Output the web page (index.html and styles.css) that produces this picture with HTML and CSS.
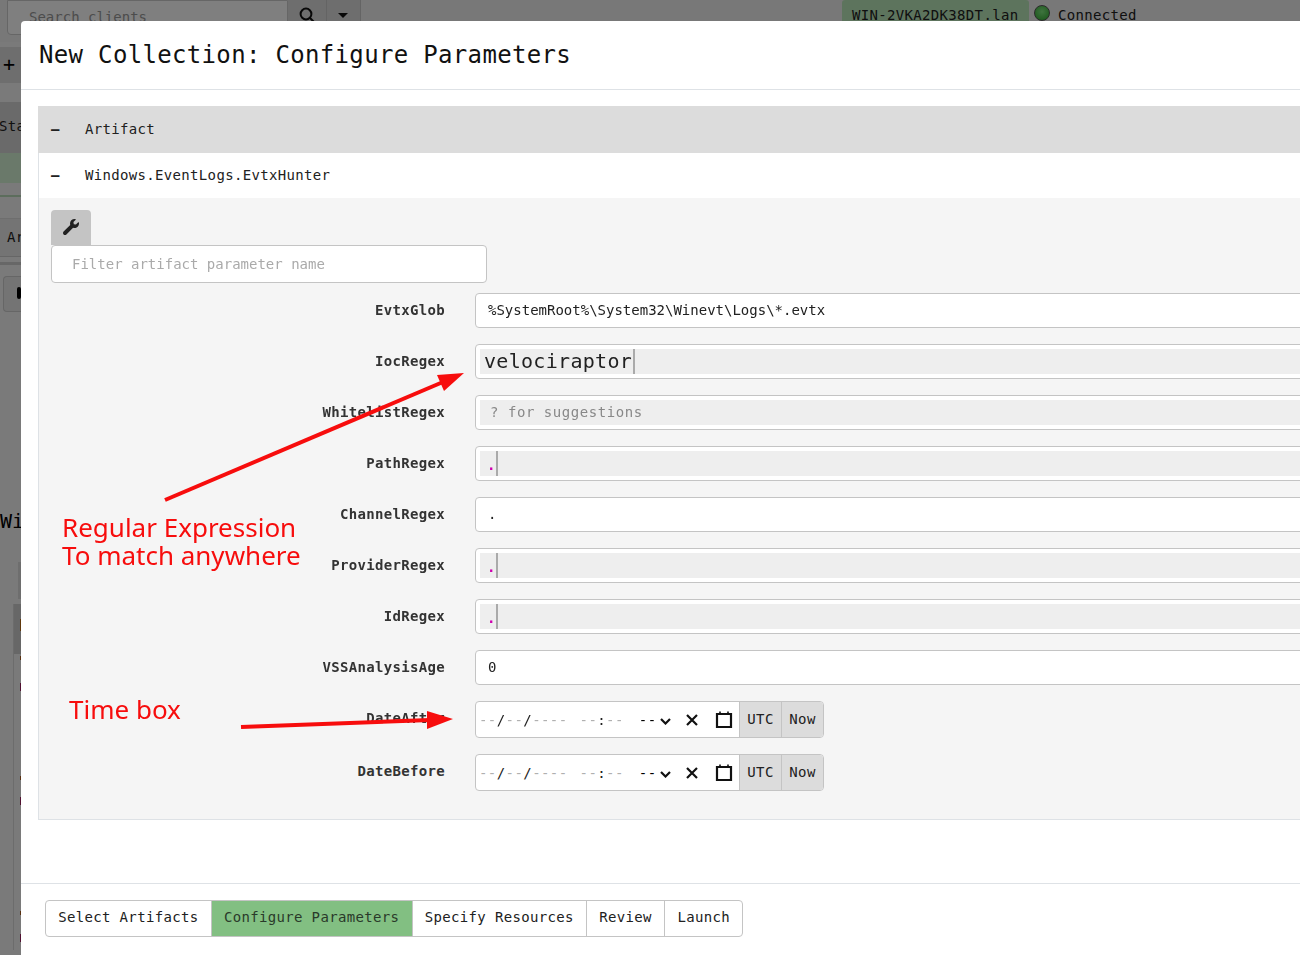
FILE: index.html
```html
<!DOCTYPE html>
<html lang="en">
<head>
    <meta charset="UTF-8">
    <meta name="viewport" content="width=device-width, initial-scale=1.0">
    <title>New Collection: Configure Parameters</title>
    <link rel="stylesheet" href="styles.css">
</head>
<body>
    <div class="page">
        <div class="navbar">
            <div class="search-box">Search clients</div>
            <div class="search-btn">
                <svg width="16" height="16" viewBox="0 0 16 16"><circle cx="7" cy="7" r="5.4" fill="none" stroke="#111" stroke-width="2"/><path d="M11 11l4 4" stroke="#111" stroke-width="2"/></svg>
            </div>
            <div class="search-btn search-caret"><span class="caret"></span></div>
            <div class="navbar-right">
                <div class="org-badge">WIN-2VKA2DK38DT.lan</div>
                <span class="led"></span>
                <span class="conn">Connected</span>
            </div>
        </div>
        <div class="side">
            <div class="side-tab">+</div>
            <div class="side-head">Sta</div>
            <div class="side-green"></div>
            <div class="side-line"></div>
            <div class="side-row">Ar</div>
            <div class="side-rule"></div>
            <div class="side-btn"><span></span></div>
            <div class="side-name">Wi</div>
            <div class="side-box"></div>
            <div class="side-table">
                <div class="side-thead"><i></i></div>
                <i class="mark m1"></i><i class="mark m2"></i><i class="mark m3"></i><i class="mark m4"></i><i class="mark m5"></i><i class="mark m6"></i>
            </div>
        </div>
    </div>
    <div class="backdrop"></div>

    <div class="modal">
        <div class="modal-header">New Collection: Configure Parameters</div>
        <div class="modal-body">
            <div class="acc-head"><span class="acc-sign">–</span>Artifact</div>
            <div class="acc-sub"><span class="acc-sign">–</span>Windows.EventLogs.EvtxHunter</div>
            <div class="panel">
                <div class="wrench-btn">
                    <svg width="16" height="16" viewBox="0 0 512 512"><path fill="#212121" d="M507.73 109.1c-2.24-9.03-13.54-12.09-20.12-5.51l-74.36 74.36-67.88-11.31-11.31-67.88 74.36-74.36c6.62-6.62 3.43-17.9-5.66-20.16-47.38-11.74-99.55.91-136.58 37.93-39.64 39.64-50.55 97.1-34.05 147.2L18.74 402.76c-24.99 24.99-24.99 65.51 0 90.5 24.99 24.99 65.51 24.99 90.5 0l213.21-213.21c50.12 16.71 107.47 5.68 147.37-34.22 37.07-37.07 49.7-89.32 37.91-136.73z"/></svg>
                </div>
                <div class="filter-input">Filter artifact parameter name</div>

                <div class="param">
                    <label>EvtxGlob</label>
                    <div class="field plain">%SystemRoot%\System32\Winevt\Logs\*.evtx</div>
                </div>
                <div class="param">
                    <label>IocRegex</label>
                    <div class="field"><div class="editor big">velociraptor<span class="cursor"></span></div></div>
                </div>
                <div class="param">
                    <label>WhitelistRegex</label>
                    <div class="field"><div class="editor hint">? for suggestions</div></div>
                </div>
                <div class="param">
                    <label>PathRegex</label>
                    <div class="field"><div class="editor"><span class="dot">.</span><span class="cursor"></span></div></div>
                </div>
                <div class="param">
                    <label>ChannelRegex</label>
                    <div class="field plain">.</div>
                </div>
                <div class="param">
                    <label>ProviderRegex</label>
                    <div class="field"><div class="editor"><span class="dot">.</span><span class="cursor"></span></div></div>
                </div>
                <div class="param">
                    <label>IdRegex</label>
                    <div class="field"><div class="editor"><span class="dot">.</span><span class="cursor"></span></div></div>
                </div>
                <div class="param">
                    <label>VSSAnalysisAge</label>
                    <div class="field plain">0</div>
                </div>
                <div class="param date-param">
                    <label>DateAfter</label>
                    <div class="date-group">
                        <div class="date-text">
                            <span class="dim">--</span>/<span class="dim">--</span>/<span class="dim">----</span>
                            <span class="date-time"><span class="dim">--</span>:<span class="dim">--</span></span>
                            <span class="date-ampm">--</span>
                            <svg class="chev" width="11" height="7" viewBox="0 0 11 7"><path d="M1 1l4.5 4.5L10 1" fill="none" stroke="#111" stroke-width="2.2"/></svg>
                        </div>
                        <svg class="clear" width="12" height="12" viewBox="0 0 12 12"><path d="M1 1l10 10M11 1L1 11" stroke="#111" stroke-width="2.2"/></svg>
                        <svg class="cal" width="18" height="18" viewBox="0 0 18 18"><path d="M2 3h14v13H2z" fill="none" stroke="#111" stroke-width="2.2"/><path d="M5 0.5v3M13 0.5v3" stroke="#111" stroke-width="1.6"/></svg>
                        <div class="date-btn">UTC</div>
                        <div class="date-btn">Now</div>
                    </div>
                </div>
                <div class="param date-param">
                    <label>DateBefore</label>
                    <div class="date-group">
                        <div class="date-text">
                            <span class="dim">--</span>/<span class="dim">--</span>/<span class="dim">----</span>
                            <span class="date-time"><span class="dim">--</span>:<span class="dim">--</span></span>
                            <span class="date-ampm">--</span>
                            <svg class="chev" width="11" height="7" viewBox="0 0 11 7"><path d="M1 1l4.5 4.5L10 1" fill="none" stroke="#111" stroke-width="2.2"/></svg>
                        </div>
                        <svg class="clear" width="12" height="12" viewBox="0 0 12 12"><path d="M1 1l10 10M11 1L1 11" stroke="#111" stroke-width="2.2"/></svg>
                        <svg class="cal" width="18" height="18" viewBox="0 0 18 18"><path d="M2 3h14v13H2z" fill="none" stroke="#111" stroke-width="2.2"/><path d="M5 0.5v3M13 0.5v3" stroke="#111" stroke-width="1.6"/></svg>
                        <div class="date-btn">UTC</div>
                        <div class="date-btn">Now</div>
                    </div>
                </div>
            </div>
        </div>
        <div class="modal-footer">
            <div class="steps">
                <div class="step">Select Artifacts</div>
                <div class="step active">Configure Parameters</div>
                <div class="step">Specify Resources</div>
                <div class="step">Review</div>
                <div class="step">Launch</div>
            </div>
        </div>
    </div>

    <!-- annotations drawn on top of the screenshot -->
    <div class="note note-regex">Regular Expression<br>To match anywhere</div>
    <div class="note note-time">Time box</div>
    <svg class="arrows" width="1300" height="955" viewBox="0 0 1300 955">
        <path d="M165 500L443 382" stroke="#f70d0d" stroke-width="4" fill="none"/>
        <path d="M464 373L437 375L444 391z" fill="#f70d0d"/>
        <path d="M241 727L430 720" stroke="#f70d0d" stroke-width="4" fill="none"/>
        <path d="M453 719L427 711L427 729z" fill="#f70d0d"/>
    </svg>
</body>
</html>
```

FILE: styles.css
```css
* {
    box-sizing: border-box;
}
body {
    margin: 0;
    height: 955px;
    overflow: hidden;
    background: #f6f6f6;
    color: #212121;
    font-family: "DejaVu Sans Mono", monospace;
    font-size: 14px;
    letter-spacing: 0.33px;
}

/* page behind the dialog */
.page {
    height: 955px;
    display: flex;
    flex-direction: column;
}
.navbar {
    height: 42px;
    flex: none;
    display: flex;
    padding-left: 7px;
    background: #f0f0f0;
}
.search-box {
    width: 281px;
    height: 35px;
    padding: 8px 21px;
    background: #fff;
    border: 1px solid #ccc;
    border-radius: 0 0 4px 4px;
    color: #999;
    letter-spacing: 0;
}
.search-btn {
    width: 39px;
    height: 35px;
    padding: 7px 11px;
    background: #dcdcdc;
    border-right: 1px solid #c8c8c8;
}
.search-caret {
    width: 34px;
    padding: 13px 11px;
}
.caret {
    display: block;
    width: 0;
    border: 5px solid transparent;
    border-top: 5px solid #111;
    border-bottom: 0;
}
.navbar-right {
    margin-left: 481px;
    display: flex;
    align-items: flex-start;
}
.org-badge {
    width: 187px;
    height: 24px;
    padding: 7px 10px;
    background: #bbe8bb;
    border-radius: 3px;
}
.led {
    width: 16px;
    height: 16px;
    margin: 5px 8px 0 5px;
    border-radius: 50%;
    background: radial-gradient(circle at 50% 40%, #7fe87f, #2fa82f);
    border: 1px solid #555;
}
.conn {
    padding-top: 7px;
}
.side {
    width: 21px;
    flex: 1;
    overflow: hidden;
    padding-top: 5px;
    background: #f4f4f4;
}
.side-tab {
    height: 36px;
    padding: 5px 0 0 3px;
    background: #dcdcdc;
    font-size: 20px;
    line-height: 24px;
    color: #000;
}
.side-head {
    height: 51px;
    margin: 19px 0 0;
    padding-top: 16px;
    margin-left: -1px;
    background: #d4d4d4;
}
.side-green {
    height: 30px;
    background: #d4f2d4;
}
.side-line {
    height: 14px;
    border-bottom: 2px solid #b9dab9;
}
.side-row {
    height: 39px;
    margin-top: 21px;
    padding: 10px 0 0 7px;
    background: #e8e8e8;
    border-bottom: 1px solid #ccc;
    border-top: 1px solid #ddd;
}
.side-rule {
    height: 3px;
    margin-top: 5px;
    background: #cfcfcf;
}
.side-btn {
    height: 36px;
    margin: 11px 0 0 3px;
    padding: 10px 0 0 13px;
    background: #e8e8e8;
    border: 1px solid #ccc;
    border-right: 0;
    border-radius: 4px 0 0 4px;
}
.side-btn span {
    display: block;
    height: 12px;
    background: #000;
    border-radius: 2px;
}
.side-name {
    height: 32px;
    margin-top: 193px;
    font-size: 20px;
    line-height: 32px;
    color: #000;
    letter-spacing: 0;
    white-space: nowrap;
}
.side-box {
    height: 37px;
    margin: 25px 0 0 18px;
    background: #dcdcdc;
}
.side-table {
    position: relative;
    height: 346px;
    margin: 5px 0 0 13px;
    border-left: 1px solid #d8d8d8;
}
.side-thead {
    height: 50px;
    background: #cfcfcf;
}
.side-thead i {
    display: block;
    width: 1px;
    height: 12px;
    margin-left: 6px;
    transform: translateY(15px);
    background: #c07018;
}
.mark {
    position: absolute;
    left: 6px;
    width: 2px;
    height: 8px;
    background: #b06020;
}
.m1 { top: 52px; height: 4px; }
.m2 { top: 79px; background: #a02060; }
.m3 { top: 172px; height: 4px; }
.m4 { top: 193px; background: #a02060; }
.m5 { top: 307px; height: 4px; }
.m6 { top: 330px; background: #a02060; }
.backdrop {
    position: fixed;
    inset: 0;
    background: rgba(0, 0, 0, 0.5);
}

/* dialog */
.modal {
    position: absolute;
    left: 21px;
    top: 21px;
    width: 1340px;
    height: 940px;
    display: flex;
    flex-direction: column;
    background: #fff;
    border-radius: 4px;
}
.modal-header {
    height: 69px;
    flex: none;
    padding: 18px 18px 0;
    border-bottom: 1px solid #dee2e6;
    font-size: 24px;
    line-height: 32px;
    color: #111;
}
.modal-body {
    flex: 1;
    padding: 16px 0 0 17px;
}
.acc-head {
    height: 47px;
    padding: 14px 0 0 13px;
    background: #dcdcdc;
    line-height: 18px;
}
.acc-sub {
    height: 45px;
    padding: 13px 0 0 12px;
    border-left: 1px solid #dee2e6;
    line-height: 18px;
}
.acc-sign {
    display: inline-block;
    width: 34px;
    font-weight: bold;
}
.panel {
    height: 622px;
    padding: 12px 0 0 12px;
    background: #f5f5f5;
    border: 1px solid #dee2e6;
    border-top: 0;
}
.wrench-btn {
    width: 40px;
    height: 35px;
    padding-top: 9px;
    text-align: center;
    background: #c4c4c4;
    border-radius: 4px 4px 0 0;
}
.filter-input {
    width: 436px;
    height: 38px;
    padding: 10px 20px;
    background: #fff;
    border: 1px solid #c4c4c4;
    border-radius: 4px;
    color: #aaa;
    letter-spacing: 0;
}
.param {
    display: flex;
    height: 35px;
    margin-top: 16px;
}
.filter-input + .param {
    margin-top: 10px;
}
.date-param {
    height: 37px;
}
.param label {
    width: 394px;
    flex: none;
    padding-top: 9px;
    text-align: right;
    font-weight: bold;
    color: #333;
}
.field {
    margin-left: 30px;
    flex: 1;
    padding: 4px;
    background: #fff;
    border: 1px solid #c4c4c4;
    border-radius: 4px;
}
.plain {
    padding: 8px 12px;
    letter-spacing: 0;
}
.editor {
    height: 25px;
    padding-left: 10px;
    background: #eee;
    display: flex;
    line-height: 25px;
}
.big {
    padding-left: 4px;
    font-size: 20px;
    letter-spacing: 0.3px;
}
.hint {
    color: #888;
    letter-spacing: 0.55px;
}
.cursor {
    width: 2px;
    height: 25px;
    margin-left: 1px;
    background: #aaa;
}
.dot {
    width: 8px;
    margin-left: -3px;
    color: #d000b0;
    font-weight: bold;
    padding-top: 2px;
}
.date-group {
    margin-left: 30px;
    width: 349px;
    display: flex;
    align-items: center;
    background: #fff;
    border: 1px solid #c4c4c4;
    border-radius: 4px;
    overflow: hidden;
}
.date-text {
    width: 204px;
    padding-left: 3px;
    white-space: pre;
    display: flex;
    align-items: center;
    letter-spacing: 0.42px;
}
.dim {
    color: #b0b0b0;
}
.date-time {
    margin-left: 12px;
}
.date-ampm {
    margin-left: 15px;
    color: #000;
}
.chev {
    margin-left: 3px;
    margin-top: 3px;
}
.clear {
    margin-left: 6px;
}
.cal {
    margin-left: 17px;
    margin-right: 6px;
}
.date-btn {
    width: 42px;
    height: 100%;
    padding-top: 9px;
    text-align: center;
    background: #dcdcdc;
    border-left: 1px solid #c4c4c4;
}
.modal-footer {
    height: 78px;
    flex: none;
    padding: 16px 0 0 24px;
    border-top: 1px solid #dee2e6;
}
.steps {
    display: inline-flex;
    height: 37px;
    border: 1px solid #c4c4c4;
    border-radius: 4px;
    overflow: hidden;
}
.step {
    padding: 8px 12.3px 0;
    border-left: 1px solid #c4c4c4;
}
.step:first-child {
    border-left: 0;
}
.step.active {
    background: #82bf82;
    color: #2a3a2a;
}

/* red annotations */
.note {
    position: absolute;
    color: #f70d0d;
    font-family: "Noto Sans", sans-serif;
    font-size: 26px;
    letter-spacing: 0;
    line-height: 28px;
}
.note-regex {
    left: 62px;
    top: 513px;
}
.note-time {
    left: 69px;
    top: 695px;
}
.arrows {
    position: absolute;
    left: 0;
    top: 0;
}
```
